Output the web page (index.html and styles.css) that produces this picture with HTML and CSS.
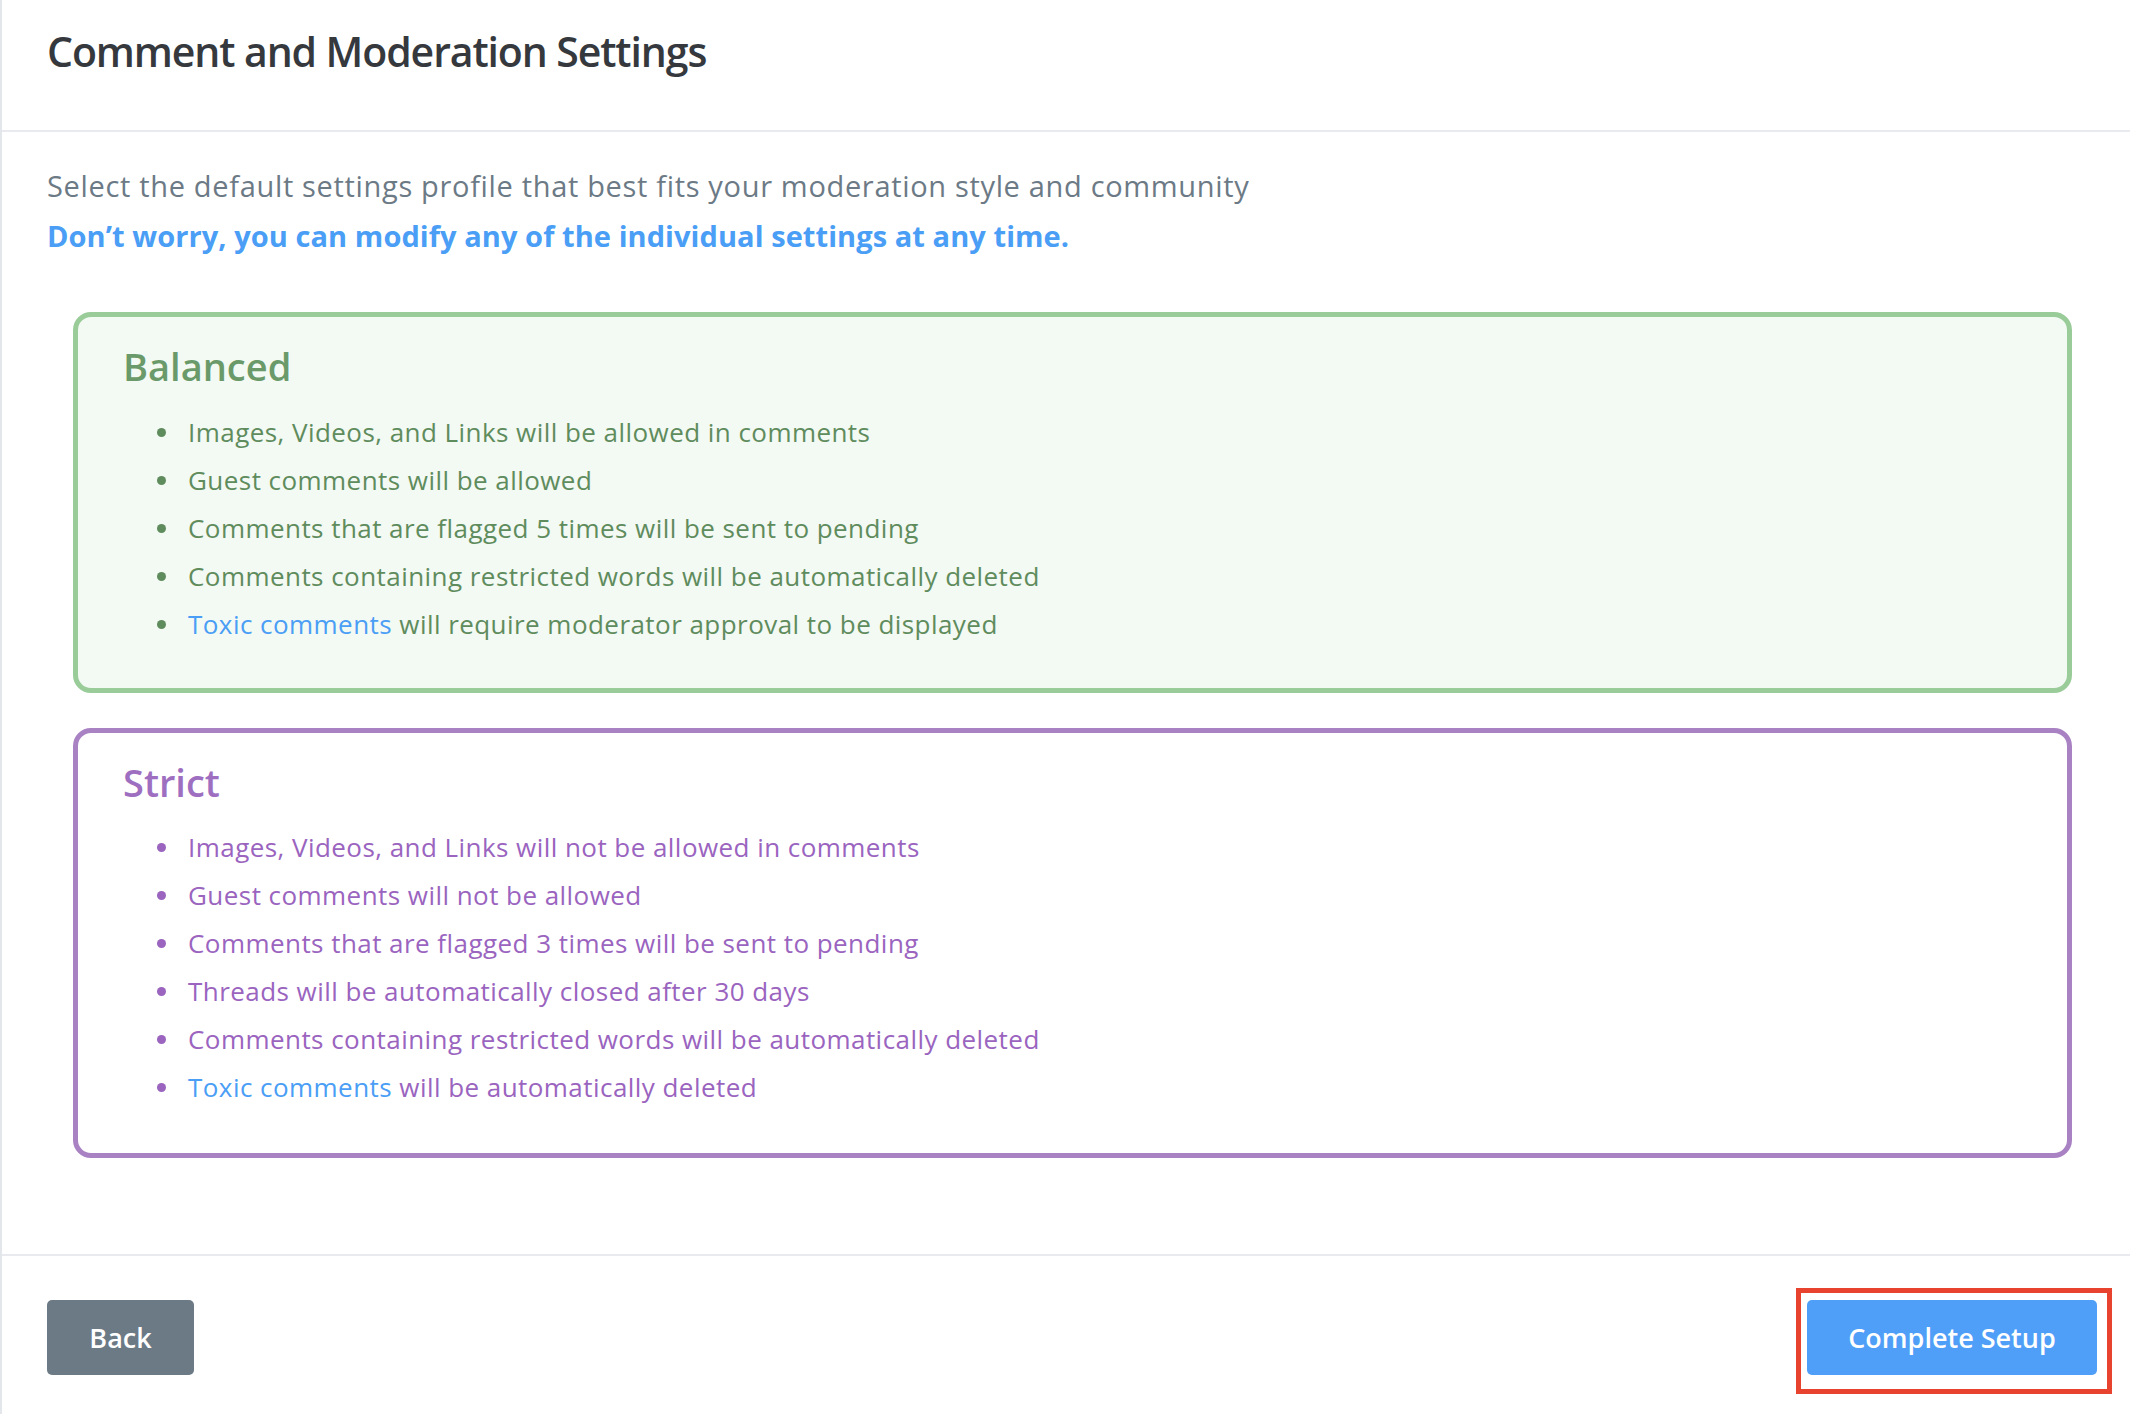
FILE: index.html
```html
<!DOCTYPE html>
<html lang="en">
<head>
<meta charset="utf-8">
<title>Comment and Moderation Settings</title>
<link rel="stylesheet" href="styles.css">
</head>
<body>
<div class="page">
  <header class="header">
    <h1 class="title">Comment and Moderation Settings</h1>
  </header>
  <main class="content">
    <p class="intro">Select the default settings profile that best fits your moderation style and community</p>
    <p class="note">Don’t worry, you can modify any of the individual settings at any time.</p>

    <section class="profile profile-balanced">
      <h2 class="profile-title">Balanced</h2>
      <ul class="rules">
        <li><span class="dot"></span><span>Images, Videos, and Links will be allowed in comments</span></li>
        <li><span class="dot"></span><span>Guest comments will be allowed</span></li>
        <li><span class="dot"></span><span>Comments that are flagged 5 times will be sent to pending</span></li>
        <li><span class="dot"></span><span>Comments containing restricted words will be automatically deleted</span></li>
        <li><span class="dot"></span><span><a class="link">Toxic comments</a> will require moderator approval to be displayed</span></li>
      </ul>
    </section>

    <section class="profile profile-strict">
      <h2 class="profile-title">Strict</h2>
      <ul class="rules">
        <li><span class="dot"></span><span>Images, Videos, and Links will not be allowed in comments</span></li>
        <li><span class="dot"></span><span>Guest comments will not be allowed</span></li>
        <li><span class="dot"></span><span>Comments that are flagged 3 times will be sent to pending</span></li>
        <li><span class="dot"></span><span>Threads will be automatically closed after 30 days</span></li>
        <li><span class="dot"></span><span>Comments containing restricted words will be automatically deleted</span></li>
        <li><span class="dot"></span><span><a class="link">Toxic comments</a> will be automatically deleted</span></li>
      </ul>
    </section>
  </main>
  <footer class="footer">
    <button class="btn btn-back" type="button">Back</button>
    <span class="btn-wrap">
      <button class="btn btn-primary" type="button">Complete Setup</button>
      <span class="highlight"></span>
    </span>
  </footer>
</div>
</body>
</html>
```
FILE: styles.css
```css
* { box-sizing: border-box; }
html, body { margin: 0; padding: 0; background: #ffffff; }
body {
  font-family: "Open Sans", "Lato", "Liberation Sans", sans-serif;
  color: #35393d;
}
.page {
  border-left: 2px solid #e3e6ea;
  min-height: 100vh;
  display: flex;
  flex-direction: column;
}
.header {
  height: 132px;
  padding: 25px 45px 0;
  border-bottom: 2px solid #e9eaf0;
}
.title {
  margin: 0;
  font-size: 41px;
  line-height: 52px;
  font-weight: 600;
  letter-spacing: -1.1px;
  color: #35393d;
}
.content {
  padding: 29px 33px 0 45px;
}
.intro {
  margin: 0;
  font-size: 29px;
  line-height: 50px;
  letter-spacing: 0.67px;
  color: #6c7a86;
}
.note {
  margin: 0;
  font-size: 29px;
  line-height: 50px;
  font-weight: 700;
  letter-spacing: 0.07px;
  color: #4a9ef5;
}
.profile {
  margin: 51px 25px 0 26px;
  border: 5px solid;
  border-radius: 18px;
  padding: 25px 40px 40px 45px;
}
.profile + .profile { margin-top: 35px; }
.profile-balanced {
  border-color: #99cc98;
  background: #f3f9f3;
  color: #5f8c5d;
}
.profile-strict {
  border-color: #a982c4;
  background: #ffffff;
  color: #9a64bf;
}
.profile-title {
  margin: 0 0 18px;
  font-size: 38px;
  line-height: 48px;
  font-weight: 600;
}
.profile-strict .profile-title { margin-bottom: 17px; }
.profile-strict { padding-bottom: 42px; }
.profile-balanced .profile-title { color: #6a9a69; }
.profile-strict .profile-title { color: #9e6fc0; }
.rules {
  list-style: none;
  margin: 0;
  padding: 0 0 0 65px;
}
.rules li {
  display: flex;
  align-items: center;
  font-size: 26px;
  line-height: 48px;
  letter-spacing: 0.45px;
}
.dot {
  flex: none;
  width: 9px;
  height: 9px;
  border-radius: 50%;
  background: currentColor;
  margin-left: -31px;
  margin-right: 22px;
}
.link { color: #4a9ef5; text-decoration: none; }
.footer {
  margin-top: 96px;
  border-top: 2px solid #e9eaf0;
  padding: 44px 33px 40px 45px;
  display: flex;
  justify-content: space-between;
  align-items: center;
}
.btn {
  font-family: inherit;
  height: 75px;
  border: 0;
  border-radius: 5px;
  color: #ffffff;
  font-size: 27px;
  font-weight: 600;
  padding: 0;
  cursor: pointer;
}
.btn-back { background: #6c7a86; width: 147px; }
.btn-primary { background: #4f9ef7; width: 290px; }
.btn-wrap { position: relative; display: inline-block; line-height: 0; }
.highlight {
  position: absolute;
  left: -11px;
  right: -15px;
  top: -12px;
  bottom: -19px;
  border: 5px solid #e8432e;
  pointer-events: none;
}
```
